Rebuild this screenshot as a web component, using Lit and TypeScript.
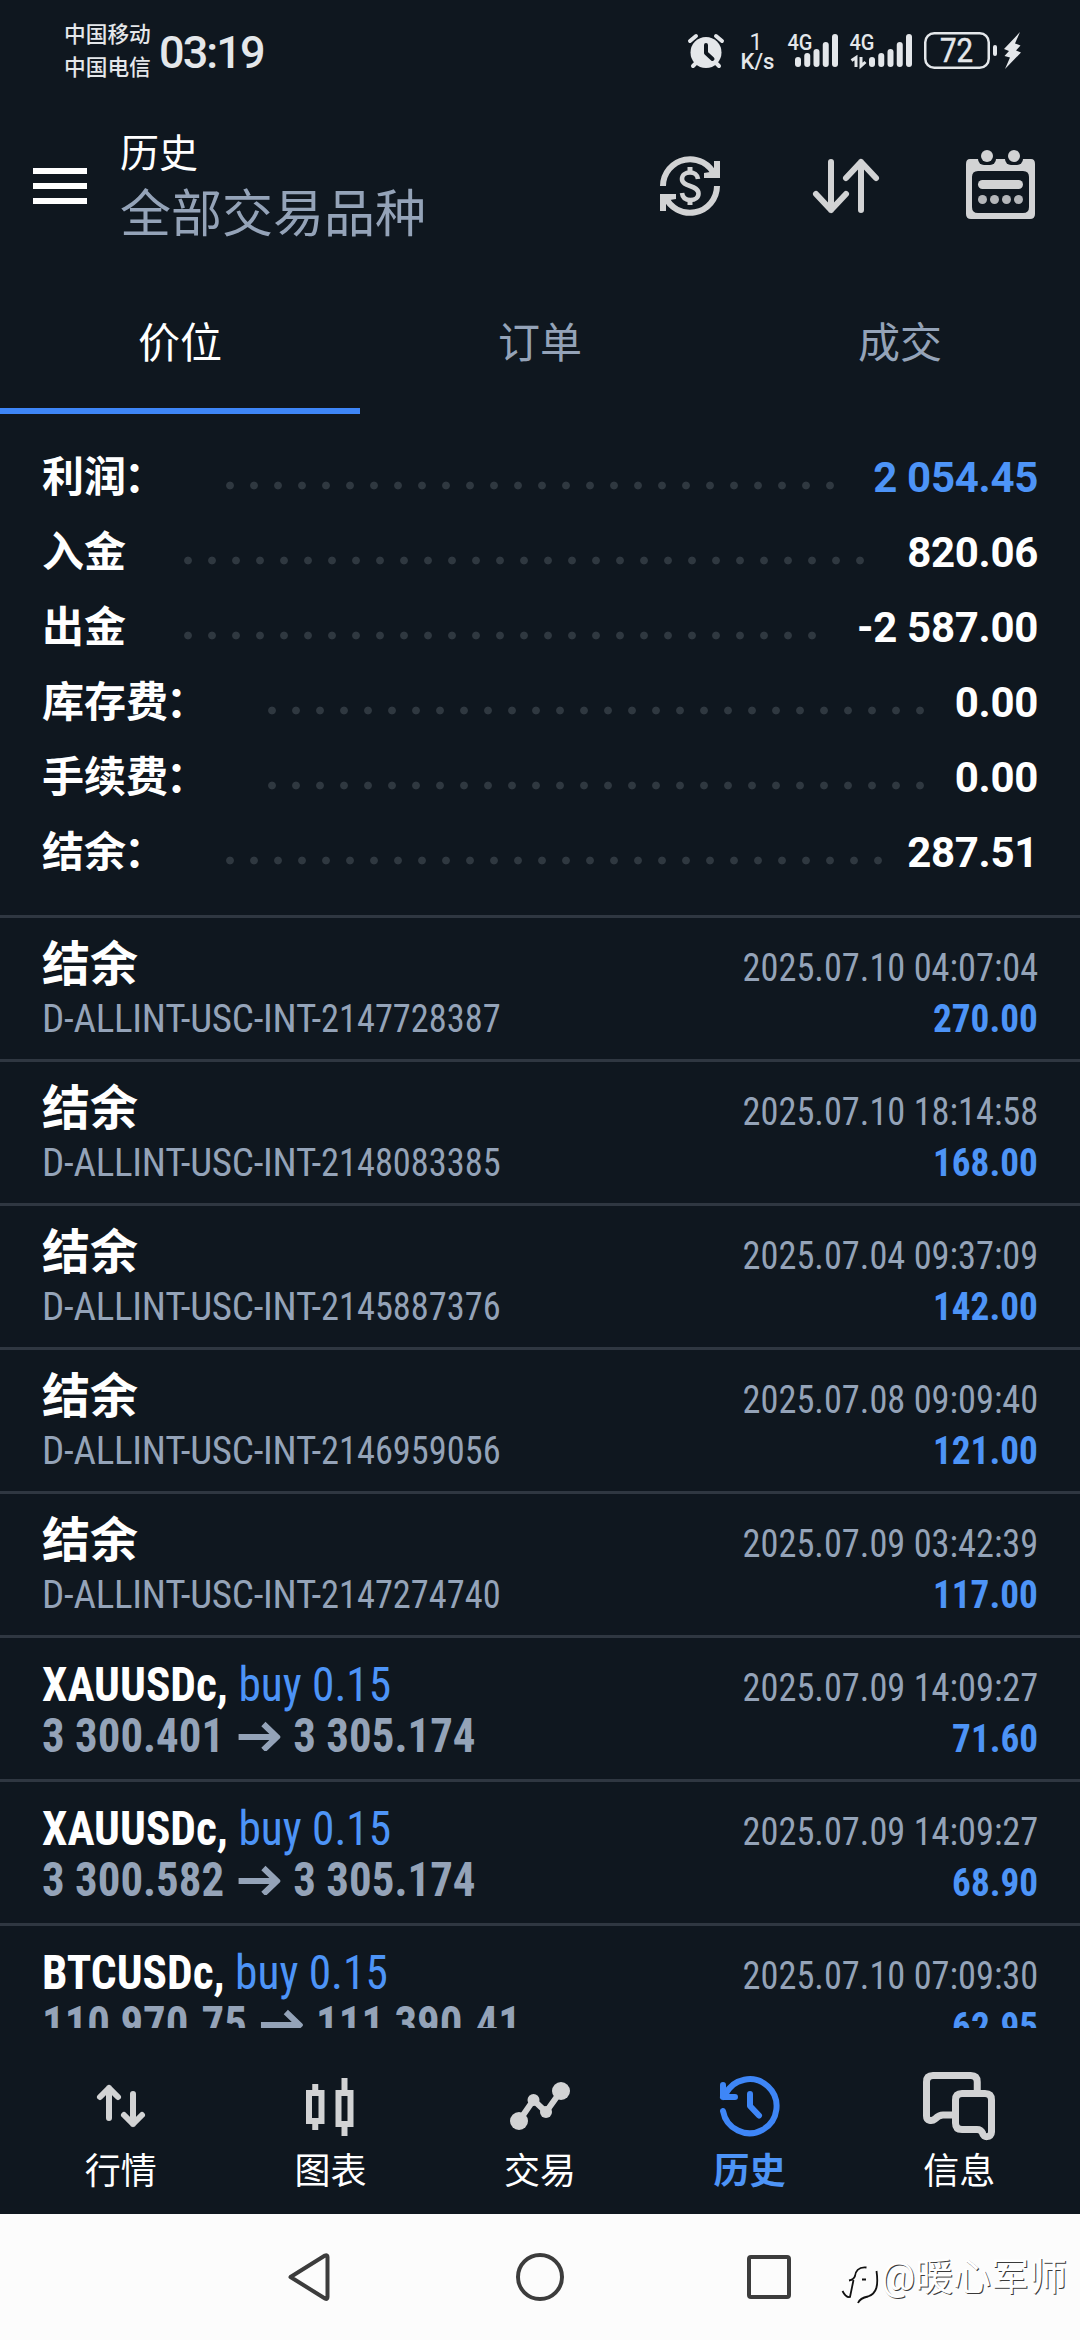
import { LitElement, html, css, svg } from "lit";
import { customElement, property } from "lit/decorators.js";
import { classMap } from "lit/directives/class-map.js";
import { styleMap } from "lit/directives/style-map.js";

interface SummaryRow { label: string; colon?: boolean; value: string; dots: number; blue?: boolean; }
interface Deal { date: string; profit: string; account?: string; symbol?: string; side?: string; from?: string; to?: string; }

const ACCOUNT_PREFIX = "D-ALLINT-USC-INT-";

const SUMMARY: SummaryRow[] = [
  { label: "利润", colon: true, value: "2 054.45", dots: 26, blue: true },
  { label: "入金", value: "820.06", dots: 29 },
  { label: "出金", value: "-2 587.00", dots: 27 },
  { label: "库存费", colon: true, value: "0.00", dots: 28 },
  { label: "手续费", colon: true, value: "0.00", dots: 28 },
  { label: "结余", colon: true, value: "287.51", dots: 28 },
];

const DEALS: Deal[] = [
  { account: "2147728387", date: "2025.07.10 04:07:04", profit: "270.00" },
  { account: "2148083385", date: "2025.07.10 18:14:58", profit: "168.00" },
  { account: "2145887376", date: "2025.07.04 09:37:09", profit: "142.00" },
  { account: "2146959056", date: "2025.07.08 09:09:40", profit: "121.00" },
  { account: "2147274740", date: "2025.07.09 03:42:39", profit: "117.00" },
  { symbol: "XAUUSDc,", side: "buy 0.15", from: "3 300.401", to: "3 305.174", date: "2025.07.09 14:09:27", profit: "71.60" },
  { symbol: "XAUUSDc,", side: "buy 0.15", from: "3 300.582", to: "3 305.174", date: "2025.07.09 14:09:27", profit: "68.90" },
  { symbol: "BTCUSDc,", side: "buy 0.15", from: "110 970.75", to: "111 390.41", date: "2025.07.10 07:09:30", profit: "62.95" },
];

@customElement("status-bar")
class StatusBar extends LitElement {
  static styles = css`
    :host { display: flex; align-items: center; height: 102px; padding: 0 54px 0 64px; box-sizing: border-box; color: #e4e7ea; }
    .carriers { font-size: 21.7px; line-height: 33px; font-weight: 500; width: 95px; white-space: nowrap; }
    .time { font-size: 45px; line-height: 60px; letter-spacing: -1.9px; font-weight: 500; flex: 1; padding-top: 3px; }
    .icons { display: block; font-family: Roboto, sans-serif; font-weight: 500; fill: #e4e7ea; }
  `;
  render() {
    const tops = [57, 53, 49, 42, 34];
    const bars = (x: number) => tops.map((t, i) => svg`<rect x=${x + i * 9.25} y=${t} width="6" height=${67 - t} rx="3"/>`);
    return html`
      <div class="carriers"><div>中国移动</div><div>中国电信</div></div>
      <div class="time">03:19</div>
      <svg class="icons" width="342" height="48" viewBox="684 27 342 48">
        <g stroke="#e4e7ea" stroke-linecap="round" fill="none">
          <path d="M690 41L696 36M716 36L722 41" stroke-width="4"/>
          <path d="M697 62L693 66M715 62L719 66" stroke-width="4"/>
        </g>
        <circle cx="706" cy="52.5" r="15.5"/>
        <path d="M706 45V53L712.500 59" stroke="#0f171f" stroke-width="4" fill="none" stroke-linecap="round" stroke-linejoin="round"/>
        <text x="756" y="50" font-size="23" text-anchor="middle" font-weight="400">1</text>
        <text x="757.500" y="68.500" font-size="22" text-anchor="middle">K/s</text>
        <text x="787.500" y="50" font-size="22.500" textLength="25" lengthAdjust="spacingAndGlyphs">4G</text>
        ${bars(795)}
        <text x="849.500" y="50" font-size="22.500" textLength="25" lengthAdjust="spacingAndGlyphs">4G</text>
        <path d="M851.500 60.500L856 57.500V67M861 57V66L865.500 62" fill="none" stroke="#e4e7ea" stroke-width="3"/>
        ${bars(869)}
        <rect x="925.250" y="33.250" width="63.500" height="34.500" rx="9" fill="none" stroke="#e4e7ea" stroke-width="2.500"/>
        <text x="956.500" y="62" font-size="32.500" text-anchor="middle" textLength="33" lengthAdjust="spacingAndGlyphs" font-weight="400" stroke="#e4e7ea" stroke-width=".5">72</text>
        <rect x="993" y="45" width="4" height="11" rx="2"/>
        <path d="M1020 32L1004 49L1009 51L1004.500 56L1010 57.500L1005 69L1021 52.500L1016 50.500L1020.500 45.500L1015 43.500Z"/>
      </svg>`;
  }
}

@customElement("app-header")
class AppHeader extends LitElement {
  static styles = css`
    :host { display: flex; align-items: center; height: 168px; padding: 0 42px 0 33px; box-sizing: border-box; }
    .menu { display: flex; flex-direction: column; gap: 9px; width: 54px; }
    .menu i { height: 6px; background: #fff; }
    .titles { flex: 1; padding-left: 33px; }
    .title { font-size: 39px; line-height: 56px; padding-bottom: 2px; color: #fff; }
    .sub { font-size: 51px; line-height: 62px; color: #94a3b8; }
    .actions { display: flex; align-items: center; }
    svg { display: block; }
    .sort { margin: 0 84px 0 87px; }
  `;
  render() {
    return html`
      <div class="menu"><i></i><i></i><i></i></div>
      <div class="titles"><div class="title">历史</div><div class="sub">全部交易品种</div></div>
      <div class="actions">
        <svg width="66" height="78" viewBox="657 147 66 78" fill="none" stroke="#d2d3d4" stroke-width="6">
          <path d="M663 186A27 27 0 0 1 715 176"/>
          <path d="M717 186A27 27 0 0 1 665 196"/>
          <path d="M720 161V178H704V173L710 172L714 168V161Z" fill="#d2d3d4" stroke="none"/>
          <path d="M660 211V194H676V199L670 200L666 204V211Z" fill="#d2d3d4" stroke="none"/>
          <path d="M698 179C697.500 174.500 694 172.500 690 172.500C685.500 172.500 682 175 682 179C682 187.500 698.500 184.500 698.500 193.500C698.500 197.500 695 200 690.500 200C685.500 200 682.500 197.500 682 193" stroke-width="4.600"/>
          <path d="M690 167V173M690 199V205" stroke-width="5"/>
        </svg>
        <svg class="sort" width="72" height="78" viewBox="810 147 72 78" fill="none" stroke="#d2d3d4" stroke-width="6" stroke-linecap="round" stroke-linejoin="round">
          <path d="M831 162V210M816 194L831 210L846 194M861 210V162M846 178L861 162L876 178"/>
        </svg>
        <svg width="72" height="78" viewBox="966 147 72 78" fill="#d2d3d4">
          <path fill-rule="evenodd" d="M970 159H1031Q1035 159 1035 164V214Q1035 219 1030 219H971Q966 219 966 214V164Q966 159 970 159ZM978 171Q972 171 972 177V207Q972 213 978 213H1023Q1029 213 1029 207V177Q1029 171 1023 171Z"/>
          <rect x="978" y="150" width="18" height="15" rx="6" fill="#0f171f"/>
          <rect x="1005" y="150" width="18" height="15" rx="6" fill="#0f171f"/>
          <circle cx="987" cy="156" r="6"/><circle cx="1014" cy="156" r="6"/>
          <rect x="978" y="180" width="45" height="9" rx="4.500"/>
          <g fill="#b4b6b9"><circle cx="982.500" cy="199.500" r="4.500"/><circle cx="994.500" cy="199.500" r="4.500"/><circle cx="1006.500" cy="199.500" r="4.500"/><circle cx="1018.500" cy="199.500" r="4.500"/></g>
        </svg>
      </div>`;
  }
}

@customElement("summary-panel")
class SummaryPanel extends LitElement {
  static styles = css`
    :host { display: block; padding: 26px 42px 25px; }
    .row { display: flex; height: 75px; line-height: 75px; font-size: 42px; font-weight: 700; color: #fff; white-space: nowrap; }
    .colon { margin: 0 2px 0 -2px; }
    .dots { margin: 41px 0 0 50px; height: 9px; background: radial-gradient(circle at 12px 4.5px, #2f3840 3.4px, transparent 4.3px) 0 0 / 24px 9px repeat-x; }
    .value { margin-left: auto; letter-spacing: -0.3px; }
    .blue { color: #4d94f7; }
  `;
  render() {
    return SUMMARY.map((r) => html`
      <div class="row">
        <span>${r.label}${r.colon ? html`<span class="colon">：</span>` : null}</span>
        <span class="dots" style=${styleMap({ width: `${r.dots * 24}px` })}></span>
        <span class=${classMap({ value: true, blue: !!r.blue })}>${r.value}</span>
      </div>`);
  }
}

@customElement("deal-row")
class DealRow extends LitElement {
  @property({ attribute: false }) deal!: Deal;
  static styles = css`
    :host { display: block; height: 144px; box-sizing: border-box; border-top: 3px solid #2f3741; padding: 21px 42px 0; flex: none;
      font-family: "Roboto Condensed", Roboto, "Noto Sans CJK SC", sans-serif; font-stretch: 75%; }
    .line { display: flex; align-items: baseline; height: 51px; line-height: 51px; font-size: 48px; white-space: nowrap; color: #94a3b8; }
    .line::before { content: "\\200b"; width: 0; }
    .name { font-weight: 700; color: #fff; }
    .pair { font-weight: 700; color: #fff; transform: scaleX(.945); transform-origin: left; }
    .side { color: #4d94f7; font-weight: 400; }
    .price { font-weight: 700; display: flex; align-items: baseline; transform: scaleX(.935); transform-origin: left; }
    .arrow { margin: 0 14px 0 15px; width: 45px; height: 30px; align-self: center; }
    .note { font-size: 39px; letter-spacing: -0.25px; }
    .digits { display: inline-block; letter-spacing: 0; transform: scaleX(.933); transform-origin: left; }
    .date { margin-left: auto; font-size: 39px; transform: scaleX(.932); transform-origin: right; }
    .profit { margin-left: auto; font-size: 39px; font-weight: 700; color: #4d94f7; transform: scaleX(.955); transform-origin: right; }
  `;
  render() {
    const d = this.deal;
    return html`
      <div class="line">
        ${d.symbol ? html`<span class="pair">${d.symbol} <span class="side">${d.side}</span></span>` : html`<span class="name">结余</span>`}
        <span class="date">${d.date}</span>
      </div>
      <div class="line">
        ${d.account ? html`<span class="note">${ACCOUNT_PREFIX}<span class="digits">${d.account}</span></span>` : html`<span class="price">${d.from}
          <svg class="arrow" viewBox="0 0 42 30" preserveAspectRatio="none" fill="none" stroke="#94a3b8" stroke-width="6"><path d="M0 16H38M25 3L38.500 16L25 29"/></svg>${d.to}</span>`}
        <span class="profit">${d.profit}</span>
      </div>`;
  }
}

@customElement("bottom-nav")
class BottomNav extends LitElement {
  static styles = css`
    :host { display: flex; height: 186px; padding: 0 16px; box-sizing: border-box; flex: none; }
    .item { flex: 1; display: flex; flex-direction: column; align-items: center; color: #fff; font-size: 36px; line-height: 54px; padding-top: 36px; }
    .item span { padding-top: 1px; }
    .active { color: #4d94f7; font-weight: 700; }
    svg { display: block; width: 84px; height: 80px; }
  `;
  render() {
    const g = "#d2d3d4";
    const items = [
      { label: "行情", x: 80, icon: svg`<g fill="none" stroke=${g} stroke-width="6" stroke-linecap="round" stroke-linejoin="round"><path d="M110 2118V2088M101 2097L110 2088L119 2097M134 2094V2124M125 2115L134 2124L143 2115"/></g>` },
      { label: "图表", x: 289, icon: svg`<g fill="none" stroke=${g} stroke-width="6"><path d="M310 2093H322.500V2121H310ZM339.500 2093H351.500V2124H339.500ZM316.250 2084V2092M316.250 2122V2130M345.500 2078V2092M345.500 2125V2136"/></g>` },
      { label: "交易", x: 498, icon: svg`<g fill=${g}><path d="M519 2121L533.500 2100L546 2112L561 2091" fill="none" stroke=${g} stroke-width="6"/><circle cx="519" cy="2121" r="9"/><circle cx="533.500" cy="2100" r="6"/><circle cx="546" cy="2112" r="6"/><circle cx="561" cy="2091" r="9"/></g>` },
      { label: "历史", x: 707, active: true, icon: svg`<g fill="none" stroke="#3e86f7" stroke-width="6" stroke-linecap="round" stroke-linejoin="round"><path d="M722 2111A27 27 0 1 0 724 2095M722 2085V2097H734M722 2097L728 2089M749 2094V2106L758 2115.500"/></g>` },
      { label: "信息", x: 916, icon: svg`<g fill="none" stroke=${g} stroke-width="7"><path d="M976.250 2092V2082Q976.250 2075.500 969.750 2075.500H932Q925.500 2075.500 925.500 2082V2116C925.500 2121 931 2121.500 934 2119Q938 2115 942 2115H953"/><path d="M961 2093.500H984Q990.500 2093.500 990.500 2100V2132C990.500 2138 982 2138 981.500 2133Q980 2129.500 976 2129.500H961Q954.500 2129.500 954.500 2123V2100Q954.500 2093.500 961 2093.500Z"/></g>` },
    ];
    return items.map((i) => html`
      <div class=${classMap({ item: true, active: !!i.active })}>
        <svg viewBox=${`${i.x} 2064 84 80`}>${i.icon}</svg>
        <span>${i.label}</span>
      </div>`);
  }
}

@customElement("app-root")
class AppRoot extends LitElement {
  static styles = css`
    :host { display: flex; flex-direction: column; position: relative; width: 1080px; height: 2340px; overflow: hidden; background: #0f171f;
      font-family: Roboto, "Noto Sans CJK SC", sans-serif; }
    .tabs { display: flex; height: 144px; flex: none; }
    .tab { flex: 1; text-align: center; font-size: 42px; line-height: 147px; height: 144px; color: #94a3b8; box-sizing: border-box; }
    .on { color: #fff; border-bottom: 6px solid #3e86f7; }
    .list { height: 1113px; flex: none; overflow: hidden; display: flex; flex-direction: column; }
    .sys { height: 126px; background: #fcfcfc; flex: none; display: flex; align-items: center; justify-content: center; }
    .sys svg { display: block; }
    .mark { position: absolute; left: 841px; top: 2249px; display: flex; align-items: center; height: 56px; font-size: 38px; line-height: 56px; color: #fff; text-shadow: 1px 1px 0 #3a3a3a; white-space: nowrap; }
    .mark svg { display: block; }
  `;
  render() {
    return html`
      <status-bar></status-bar>
      <app-header></app-header>
      <div class="tabs"><div class="tab on">价位</div><div class="tab">订单</div><div class="tab">成交</div></div>
      <summary-panel></summary-panel>
      <div class="list">${DEALS.map((d) => html`<deal-row .deal=${d}></deal-row>`)}</div>
      <bottom-nav></bottom-nav>
      <div class="sys">
        <svg width="520" height="60" viewBox="280 2247 520 60" fill="none" stroke="#3c3c3c" stroke-width="4" stroke-linejoin="round">
          <path d="M290.500 2277L325 2255.500Q327.500 2254.500 327.500 2257V2297Q327.500 2300 325 2298.500Z"/>
          <circle cx="540" cy="2277" r="22"/>
          <rect x="749" y="2257" width="40" height="40" rx="2"/>
        </svg>
      </div>
      <div class="mark">
        <svg width="40" height="56" viewBox="840 2249 40 56" fill="none" stroke="#111" stroke-width="1.800">
          <path d="M865.500 2267.500C857 2266.500 854.500 2272 854 2276Q853 2279.500 848 2280.500M852.500 2280L849 2297Q845 2298 841.500 2291M861 2279.500H865M875.500 2271C877.500 2285 876 2293.500 867 2296.500Q859 2298 857 2303"/>
        </svg>
        <span>@暖心军师</span>
      </div>`;
  }
}
